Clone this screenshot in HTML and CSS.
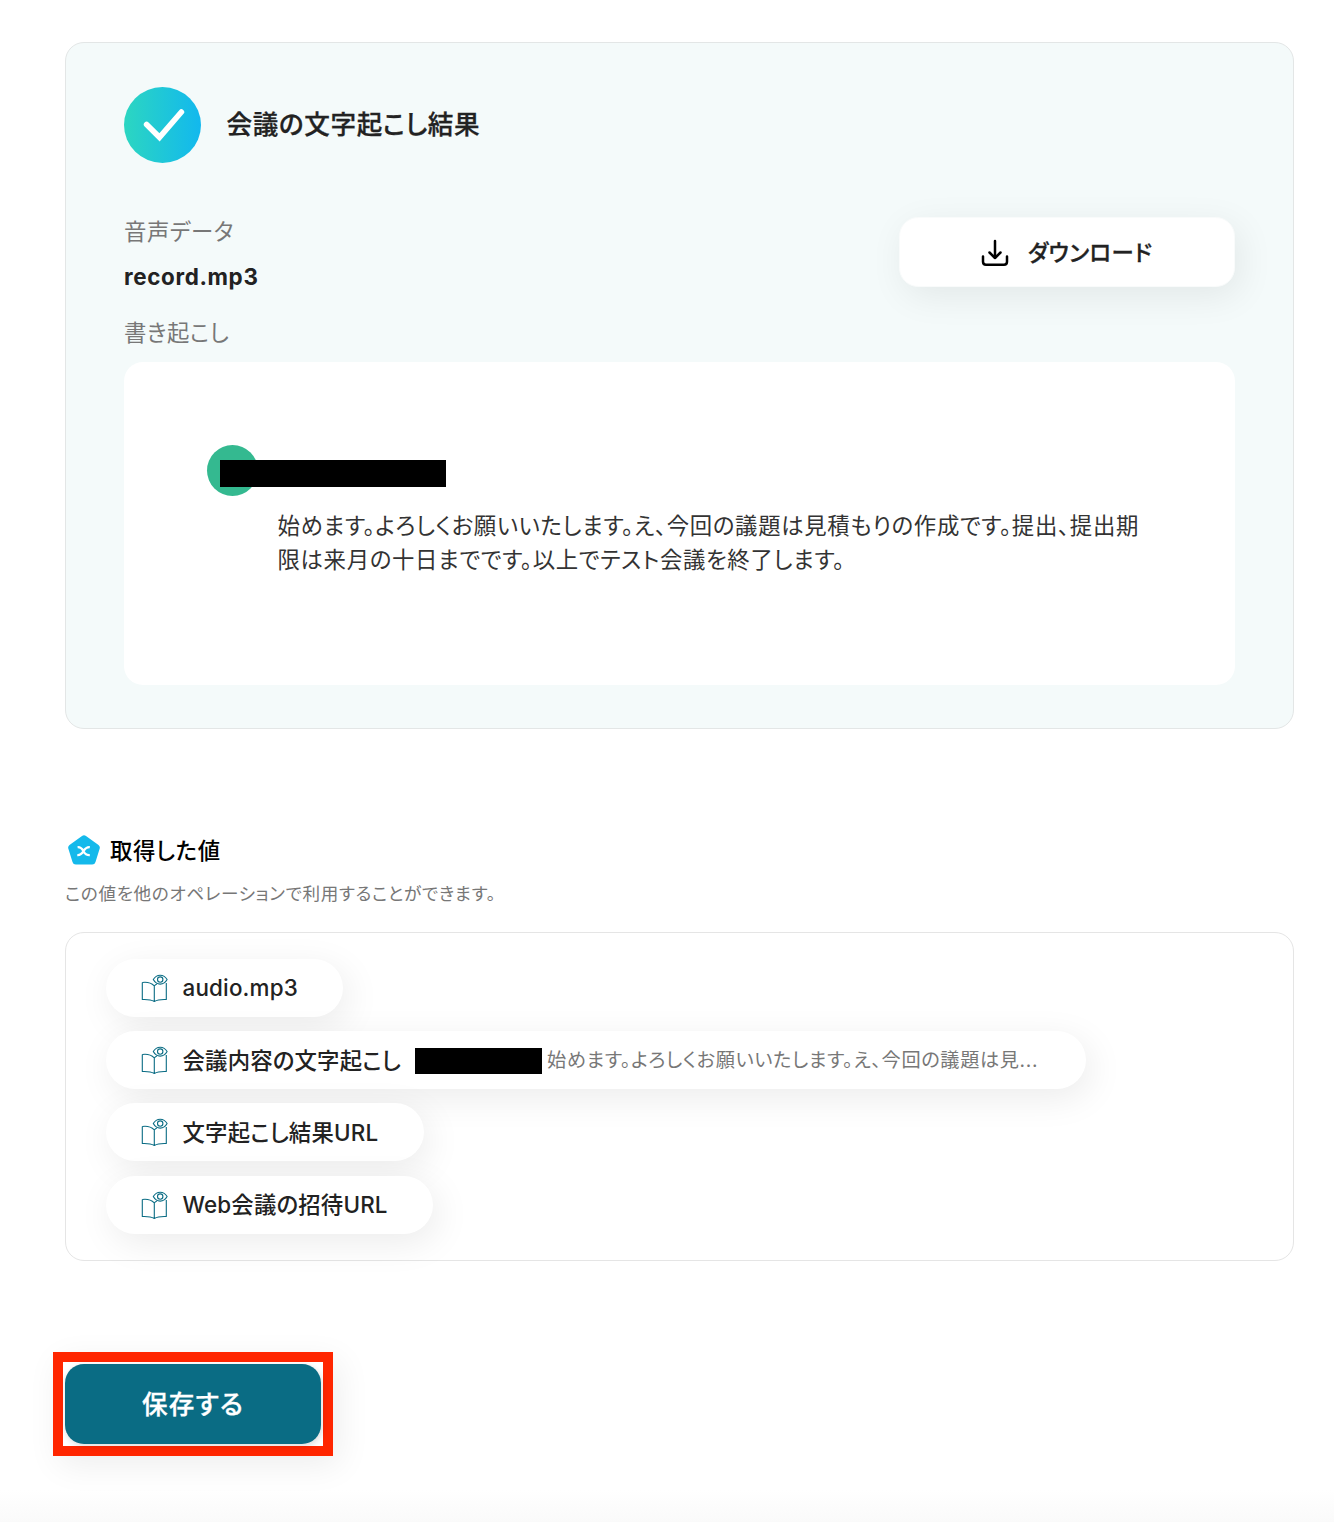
FILE: index.html
```html
<!DOCTYPE html>
<html lang="ja">
<head>
<meta charset="utf-8">
<title>会議の文字起こし結果</title>
<link rel="stylesheet" href="styles.css">
</head>
<body>
<svg class="defs" aria-hidden="true">
  <symbol id="book" viewBox="0 0 28 28">
    <path d="M1.3 8.500v17c4-.2 8.600 0 12 2 3.400-2 8-2.200 12-2V9M1.300 8.500c5-.7 9 .5 12 3.400v15.500M13.300 11.900c.7-.8 1.600-1.500 2.500-2M12.300 5.600c3.200-5.900 10.600-5.900 13.800 0-3.200 6-10.600 6-13.800 0z"/>
    <circle cx="19.200" cy="5.600" r="2.700"/>
  </symbol>
</svg>
<main class="page">
  <section class="result">
    <header class="result-head">
      <svg class="done" viewBox="0 0 77 76">
        <defs><linearGradient id="g" x1="0" x2="1"><stop offset="0" stop-color="#2cd6c1"/><stop offset="1" stop-color="#12b8ee"/></linearGradient></defs>
        <ellipse cx="38.500" cy="38" rx="38.500" ry="38" fill="url(#g)"/>
        <path d="M22.600 37.500 35.500 50.300 57.400 25" fill="none" stroke="#fff" stroke-width="5.600" stroke-linecap="round"/>
      </svg>
      <h1>会議の文字起こし結果</h1>
    </header>
    <div class="audio">
      <div class="audio-info">
        <div class="label">音声データ</div>
        <div class="file">record.mp3</div>
      </div>
      <button class="download">
        <svg viewBox="0 0 28 28"><path d="M14 2v17M8.500 13.500 14 19l5.500-5.500M2 17.500v5.300q0 3 3 3h18q3 0 3-3v-5.300"/></svg>
        <span>ダウンロード</span>
      </button>
    </div>
    <div class="label script-label">書き起こし</div>
    <div class="transcript">
      <div class="speaker"><i class="avatar"></i><i class="mask mask-name"></i></div>
      <p>始めます。よろしくお願いいたします。え、今回の議題は見積もりの作成です。提出、提出期<br>限は来月の十日までです。以上でテスト会議を終了します。</p>
    </div>
  </section>

  <section class="values">
    <h2>
      <svg viewBox="0 0 32 30"><path d="M14 1q2-1.300 4 0l12.500 9q1.800 1.400 1.200 3.400L27.500 27q-.7 2.600-3.300 2.600H7.800q-2.600 0-3.300-2.600L.3 13.400Q-.3 11.400 1.500 10z" fill="#14b9eb"/><path d="M9.600 12.200c3.200-.2 4.300 1.100 5.900 4s2.700 4.100 6.300 3.900M21.800 12.200c-3.400-.2-4.600 1.100-6.300 4s-2.900 4.100-6.200 3.900" fill="none" stroke="#fff" stroke-width="2.300"/></svg>
      <span>取得した値</span>
    </h2>
    <p class="hint">この値を他のオペレーションで利用することができます。</p>
    <div class="chips">
      <div class="chip chip-audio"><svg><use href="#book"/></svg><span>audio.mp3</span></div>
      <div class="chip chip-text"><svg><use href="#book"/></svg><span class="name">会議内容の文字起こし</span><i class="mask mask-value"></i><span class="preview">始めます。よろしくお願いいたします。え、今回の議題は見...</span></div>
      <div class="chip chip-result"><svg><use href="#book"/></svg><span class="name">文字起こし結果URL</span></div>
      <div class="chip chip-invite"><svg><use href="#book"/></svg><span class="name">Web会議の招待URL</span></div>
    </div>
  </section>

  <div class="highlight"><button class="save">保存する</button></div>
</main>
</body>
</html>
```
FILE: styles.css
```css
* { box-sizing: border-box; }
body {
  margin: 0;
  background: #fff;
  color: #222;
  font-family: Inter, "Noto Sans CJK JP", sans-serif;
  font-size: 22.4px;
  font-feature-settings: "palt";
}
h1, h2, p { margin: 0; }
button { border: 0; font: inherit; color: inherit; font-feature-settings: "palt"; }
.defs { position: absolute; width: 0; height: 0; }
.page {
  height: 1522px;
  padding: 42px 40px 0 65px;
  background: linear-gradient(#fff 1490px, #fafafa 1522px);
}
.result {
  height: 687px;
  padding: 44px 58px 0;
  border: 1px solid #e3e6e6;
  border-radius: 19px;
  background: #f4fafa;
}
.result-head { display: flex; align-items: center; gap: 25.600px; height: 76px; }
.done { width: 77px; height: 76px; }
h1 { font-size: 25.6px; font-weight: 500; line-height: 38px; letter-spacing: .6px; -webkit-text-stroke: .3px; }
.audio { display: flex; justify-content: space-between; margin-top: 54px; height: 92px; }
.label { margin-top: 1px; color: #777; line-height: 28px; letter-spacing: .5px; }
.file { margin-top: 17px; font-weight: 700; line-height: 28px; letter-spacing: .65px; }
.download {
  display: flex;
  align-items: center;
  justify-content: center;
  gap: 19px;
  width: 336px;
  height: 70px;
  padding: 0 1px 0 0;
  border: 1px solid #f9fbfb;
  border-radius: 19px;
  background: #fff;
  font-weight: 500;
  letter-spacing: .4px;
  -webkit-text-stroke: .3px;
  box-shadow: 5px 9px 36px rgba(0, 0, 0, .075);
}
.download span { padding-bottom: 3px; }
.download svg { width: 28px; height: 28px; margin-top: 1px; fill: none; stroke: #000; stroke-width: 2.500; stroke-linecap: round; stroke-linejoin: round; }
.script-label { margin-top: 10px; }
.transcript {
  height: 323px;
  margin-top: 15px;
  padding: 83px 83px 0;
  border-radius: 19px;
  background: #fff;
}
.speaker { display: flex; align-items: center; height: 51px; }
.avatar { width: 51px; height: 51px; border-radius: 50%; background: #34b990; }
.mask { display: block; flex: none; background: #000; }
.mask-name { width: 226px; height: 27px; margin: 5px 0 0 -38px; }
.transcript p { margin: 13px 0 0 70.500px; color: #333; line-height: 34px; letter-spacing: .67px; white-space: nowrap; }
.values { margin-top: 104px; }
h2 { display: flex; align-items: center; gap: 10px; height: 34px; padding-left: 3px; font-size: 22.4px; font-weight: 500; letter-spacing: .65px; color: #000; }
h2 svg { width: 32px; height: 30px; }
h2 span { padding-bottom: 2px; }
.hint { margin-top: 15px; color: #777; font-size: 17.6px; line-height: 24px; letter-spacing: .65px; }
.chips {
  display: flex;
  flex-direction: column;
  align-items: flex-start;
  gap: 14.4px;
  height: 329px;
  margin-top: 26px;
  padding: 25.700px 40px;
  border: 1px solid #e5e5e5;
  border-radius: 19px;
}
.chip {
  display: flex;
  align-items: center;
  height: 58px;
  padding-left: 35px;
  border-radius: 29px;
  background: #fff;
  font-weight: 500;
  letter-spacing: .18px;
  white-space: nowrap;
  box-shadow: 5px 9px 36px rgba(0, 0, 0, .08);
}
.chip svg { flex: none; width: 28px; height: 28px; margin-right: 13.500px; fill: none; stroke: #0a6c84; stroke-width: 1.1; stroke-linejoin: round; }
.chip-audio { width: 237px; }
.chip-text { width: 980px; }
.chip-result { width: 318px; }
.chip-invite { width: 327px; }
.name { padding-bottom: 3px; }
.mask-value { width: 127px; height: 26px; margin: 2px 5px 0 14px; }
.preview { padding-bottom: 2px; color: #777; font-size: 19.2px; font-weight: 400; letter-spacing: .63px; }
.highlight {
  display: flex;
  width: 280px;
  height: 104px;
  margin: 91px 0 0 -12px;
  padding: 2px;
  border: 10px solid #ff2600;
  box-shadow: 6px 9px 32px rgba(0, 0, 0, .07);
}
.save {
  width: 256px;
  height: 80px;
  padding: 0 0 3px;
  border-radius: 19px;
  background: #0a6c84;
  color: #fff;
  font-size: 25.6px;
  font-weight: 500;
  letter-spacing: 1.2px;
  -webkit-text-stroke: .3px;
  box-shadow: 1px 2px 6px rgba(0, 0, 0, .15);
}
```
